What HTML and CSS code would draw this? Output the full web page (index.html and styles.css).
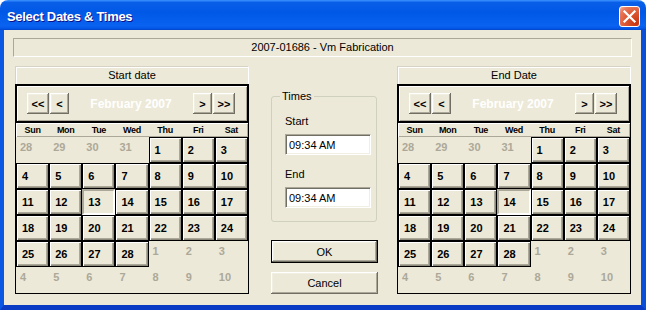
FILE: index.html
```html
<!DOCTYPE html>
<html>
<head>
    <meta charset="UTF-8">
    <title>Select Dates &amp; Times</title>
    <link rel="stylesheet" href="styles.css">
</head>
<body>
    <div class="window">
        <div class="titlebar">
            <span class="title">Select Dates &amp; Times</span>
            <button class="close" type="button">
                <svg width="21" height="21" viewBox="0 0 21 21"><path d="M5.5 5.5 L15.5 15.5 M15.5 5.5 L5.5 15.5" stroke="#fff" stroke-width="2.2" stroke-linecap="square"/></svg>
            </button>
        </div>
        <div class="client">
            <div class="job">2007-01686 - Vm Fabrication</div>
            <div class="columns">
                <section class="panel">
                    <div class="panel-caption">Start date</div>
                    <div class="calendar">
                        <div class="cal-head">
                            <button class="nav wide" type="button">&lt;&lt;</button>
                            <button class="nav" type="button">&lt;</button>
                            <span class="month">February 2007</span>
                            <button class="nav" type="button">&gt;</button>
                            <button class="nav wide" type="button">&gt;&gt;</button>
                        </div>
                        <div class="weekdays">
                            <span>Sun</span><span>Mon</span><span>Tue</span><span>Wed</span><span>Thu</span><span>Fri</span><span>Sat</span>
                        </div>
                        <div class="days">
                            <span class="day other">28</span><span class="day other">29</span><span class="day other">30</span><span class="day other">31</span><span class="day">1</span><span class="day">2</span><span class="day">3</span>
                            <span class="day">4</span><span class="day">5</span><span class="day">6</span><span class="day">7</span><span class="day">8</span><span class="day">9</span><span class="day">10</span>
                            <span class="day">11</span><span class="day">12</span><span class="day selected">13</span><span class="day">14</span><span class="day">15</span><span class="day">16</span><span class="day">17</span>
                            <span class="day">18</span><span class="day">19</span><span class="day">20</span><span class="day">21</span><span class="day">22</span><span class="day">23</span><span class="day">24</span>
                            <span class="day">25</span><span class="day">26</span><span class="day">27</span><span class="day">28</span><span class="day other">1</span><span class="day other">2</span><span class="day other">3</span>
                            <span class="day other">4</span><span class="day other">5</span><span class="day other">6</span><span class="day other">7</span><span class="day other">8</span><span class="day other">9</span><span class="day other">10</span>
                        </div>
                    </div>
                </section>

                <div class="middle">
                    <fieldset class="times">
                        <legend>Times</legend>
                        <div class="times-body">
                            <label for="start-time">Start</label>
                            <input type="text" id="start-time" value="09:34 AM">
                            <label for="end-time" class="second">End</label>
                            <input type="text" id="end-time" value="09:34 AM">
                        </div>
                    </fieldset>
                    <button class="btn btn-default" type="button">OK</button>
                    <button class="btn btn-cancel" type="button">Cancel</button>
                </div>

                <section class="panel">
                    <div class="panel-caption">End Date</div>
                    <div class="calendar">
                        <div class="cal-head">
                            <button class="nav wide" type="button">&lt;&lt;</button>
                            <button class="nav" type="button">&lt;</button>
                            <span class="month">February 2007</span>
                            <button class="nav" type="button">&gt;</button>
                            <button class="nav wide" type="button">&gt;&gt;</button>
                        </div>
                        <div class="weekdays">
                            <span>Sun</span><span>Mon</span><span>Tue</span><span>Wed</span><span>Thu</span><span>Fri</span><span>Sat</span>
                        </div>
                        <div class="days">
                            <span class="day other">28</span><span class="day other">29</span><span class="day other">30</span><span class="day other">31</span><span class="day">1</span><span class="day">2</span><span class="day">3</span>
                            <span class="day">4</span><span class="day">5</span><span class="day">6</span><span class="day">7</span><span class="day">8</span><span class="day">9</span><span class="day">10</span>
                            <span class="day">11</span><span class="day">12</span><span class="day">13</span><span class="day selected">14</span><span class="day">15</span><span class="day">16</span><span class="day">17</span>
                            <span class="day">18</span><span class="day">19</span><span class="day">20</span><span class="day">21</span><span class="day">22</span><span class="day">23</span><span class="day">24</span>
                            <span class="day">25</span><span class="day">26</span><span class="day">27</span><span class="day">28</span><span class="day other">1</span><span class="day other">2</span><span class="day other">3</span>
                            <span class="day other">4</span><span class="day other">5</span><span class="day other">6</span><span class="day other">7</span><span class="day other">8</span><span class="day other">9</span><span class="day other">10</span>
                        </div>
                    </div>
                </section>
            </div>
        </div>
    </div>
</body>
</html>
```

FILE: styles.css
```css
*
{
    box-sizing: border-box;
}

body
{
    margin: 0;
    background: #fff;
    font-family: "Liberation Sans", Arial, sans-serif;
    font-size: 11px;
    color: #000;
}

button, input
{
    font-family: inherit;
    font-size: 11px;
    color: #000;
    margin: 0;
}

.window
{
    width: 646px;
    height: 310px;
    display: flex;
    flex-direction: column;
}

.titlebar
{
    flex: none;
    height: 30px;
    display: flex;
    align-items: center;
    justify-content: space-between;
    padding: 2px 6px 0 7px;
    border-radius: 8px 8px 0 0;
    background: linear-gradient(180deg, #3d95ff 0%, #0a5fe8 8%, #0058e6 40%, #0a63f0 85%, #0658ea 94%, #0046c8 100%);
}

.title
{
    color: #fff;
    font-weight: bold;
    font-size: 13px;
    letter-spacing: -0.3px;
    text-shadow: 1px 1px #0f1089;
}

.close
{
    width: 21px;
    height: 21px;
    padding: 0;
    border: 1px solid #fff;
    border-radius: 3px;
    background: radial-gradient(circle at 85% 85%, #c6340f 0%, #dd5a36 50%, #e8795c 80%, #f4b8a4 100%);
    display: flex;
    align-items: center;
    justify-content: center;
}

.close svg
{
    display: block;
    margin: -1px;
}

.client
{
    flex: 1;
    background: #ece9d8;
    border-style: solid;
    border-width: 0 5px 5px 4px;
    border-color: #0a4fd9 #0a4fd9 #0a3bc4 #0a57e4;
}

.job
{
    margin: 8px 9px 0;
    height: 19px;
    line-height: 17px;
    text-align: center;
    border: 1px solid;
    border-color: #aca899 #fff #fff #aca899;
}

.columns
{
    display: flex;
    margin-top: 9px;
    padding: 0 10px 0 11px;
}

.panel
{
    width: 234px;
    flex: none;
}

.panel-caption
{
    height: 18px;
    line-height: 16px;
    text-align: center;
    border: 1px solid;
    border-color: #d6d3c4 #fff #fff #d6d3c4;
    border-bottom: 0;
    box-shadow: inset 1px 1px #fff;
}

.calendar
{
    height: 210px;
    border: 1px solid #000;
}

.cal-head
{
    height: 38px;
    display: flex;
    align-items: center;
    gap: 1px;
    padding: 0 12px 0 10px;
    border: 1px solid #000;
    border-bottom-width: 2px;
    box-shadow: inset 1px 1px #fff, inset -1px -1px #aca899;
}

.nav
{
    width: 19px;
    height: 21px;
    padding: 0;
    font-weight: bold;
    background: #ece9d8;
    border: 0;
    box-shadow: inset -1px -1px #716f64, inset 1px 1px #fff, inset -2px -2px #aca899, inset 2px 2px #f1efe2;
}

.nav.wide
{
    width: 22px;
}

.month
{
    flex: 1;
    text-align: center;
    color: #fff;
    font-weight: bold;
    font-size: 12px;
}

.weekdays
{
    height: 14px;
    display: grid;
    grid-template-columns: repeat(7, 1fr);
    line-height: 14px;
    font-size: 9px;
    font-weight: bold;
    letter-spacing: -0.3px;
    text-align: center;
    box-shadow: inset 1px 1px #fff, inset -1px -1px #aca899;
}

.days
{
    display: grid;
    grid-template-columns: repeat(7, 1fr);
    grid-auto-rows: 26px;
}

.day
{
    border: 1px solid #000;
    padding-left: 5px;
    line-height: 24px;
    font-weight: bold;
    box-shadow: inset 1px 1px #fff, inset -1px -1px #8d8a7c, inset -2px -2px #aca899;
}

.day.other
{
    border-color: transparent;
    box-shadow: none;
    color: #aca899;
    padding-left: 3px;
    line-height: 18px;
}

.day.selected
{
    border-width: 2px;
    border-color: #aca899 #fff #fff #aca899;
    box-shadow: none;
    padding-left: 4px;
    line-height: 22px;
}

.middle
{
    flex: 1;
    display: flex;
    flex-direction: column;
    padding-left: 22px;
}

.times
{
    width: 106px;
    margin: 24px 0 0;
    padding: 0 0 13px 8px;
    border: 1px solid #d0d0bf;
    border-radius: 3px;
}

.times legend
{
    padding: 0 2px;
    line-height: 13px;
}

.times-body
{
    padding-left: 5px;
}

.times label
{
    display: block;
    margin-top: 12px;
    line-height: 13px;
}

.times label.second
{
    margin-top: 13px;
}

.times input
{
    display: block;
    width: 86px;
    height: 21px;
    margin-top: 6px;
    padding: 0 3px;
    background: #fff;
    border: 1px solid;
    border-color: #aca899 #fff #fff #aca899;
    box-shadow: inset 1px 1px #716f64, inset -1px -1px #f1efe2;
    outline: none;
}

.btn
{
    width: 107px;
    height: 23px;
    padding: 0;
    background: #ece9d8;
    border: 0;
    box-shadow: inset -1px -1px #716f64, inset 1px 1px #fff, inset -2px -2px #aca899, inset 2px 2px #f1efe2;
}

.btn-default
{
    margin-top: 18px;
    border: 1px solid #000;
}

.btn-cancel
{
    margin-top: 9px;
    height: 22px;
}
```
